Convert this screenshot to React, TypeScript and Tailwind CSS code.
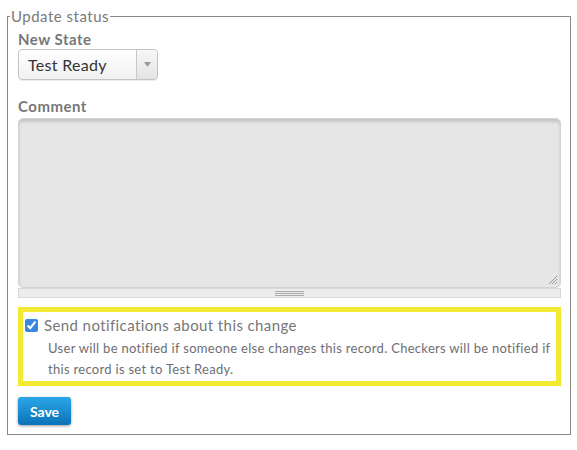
import React from "react";

export default function App() {
  return (
    <div className="w-[577px] h-[450px] bg-white pt-[7px] font-['Lato',sans-serif]">
      <fieldset className="ml-[7px] w-[564px] h-[428px] border border-[#8a8a8a] px-0">
        <legend className="ml-[2px] px-[1px] text-[15px] leading-[18px] tracking-[0.5px] text-[#7a7a7a]">
          Update status
        </legend>

        <div className="pl-[10px] pr-[9px]">
          <div className="mt-[5px] text-[15px] font-bold leading-[18px] tracking-[0.5px] text-[#777]">New State</div>
          <div className="mt-[1px] flex h-[31px] w-[140px] rounded-[4px] border border-[#c4c4c4] bg-gradient-to-b from-white to-[#f1f1f1] shadow-[0_1px_1px_rgba(0,0,0,0.08)]">
            <div className="flex flex-1 items-center pl-[9px] text-[16px] tracking-[0.3px] text-[#333]">Test Ready</div>
            <div className="flex w-[21px] items-center justify-center rounded-r-[4px] border-l border-[#c8c8c8] bg-gradient-to-b from-[#f7f7f7] to-[#e4e4e4]">
              <svg width="7" height="5" viewBox="0 0 7 5">
                <path d="M0 0h7L3.5 5z" fill="#999" />
              </svg>
            </div>
          </div>

          <div className="mt-[17px] text-[15px] font-bold leading-[18px] tracking-[0.5px] text-[#777]">Comment</div>
          <div className="mt-[3px]">
            <div className="relative h-[170px] w-full rounded-[5px] border border-[#d4d4d4] bg-[#e6e6e6] shadow-[inset_0_3px_3px_rgba(0,0,0,0.14)]">
              <svg className="absolute right-[2px] bottom-[2px]" width="10" height="10" viewBox="0 0 10 10">
                <path d="M9 1L1 9M9 4L4 9M9 7L7 9" stroke="#999" strokeWidth="1" />
              </svg>
            </div>
            <div className="flex h-[10px] w-full items-center justify-center border border-[#d8d8d8] bg-[#ededed]">
              <div className="flex w-[29px] flex-col gap-[1px]">
                <div className="h-px bg-[#aaa]" />
                <div className="h-px bg-[#aaa]" />
                <div className="h-px bg-[#aaa]" />
              </div>
            </div>
          </div>

          <div className="mt-[9px] h-[79px] border-[5px] border-[#f3e933] pl-[2px] pt-[3px]">
            <label className="flex items-center gap-[6px] text-[15px] leading-[20px] tracking-[0.4px] text-[#777]">
              <input type="checkbox" defaultChecked className="h-[13px] w-[13px] accent-[#3a87e0]" />
              Send notifications about this change
            </label>
            <p className="mt-[3px] pl-[23px] pr-[4px] text-[13px] leading-[21px] tracking-[0.3px] text-[#6e6e74]">
              User will be notified if someone else changes this record. Checkers will be notified if this record is set to Test Ready.
            </p>
          </div>

          <button className="mt-[11px] h-[28px] w-[53px] rounded-[3px] bg-gradient-to-b from-[#2aa6e8] to-[#0b73b8] text-[14px] font-bold text-white shadow-[0_1px_3px_rgba(0,0,0,0.4)]">
            Save
          </button>
        </div>
      </fieldset>
    </div>
  );
}
